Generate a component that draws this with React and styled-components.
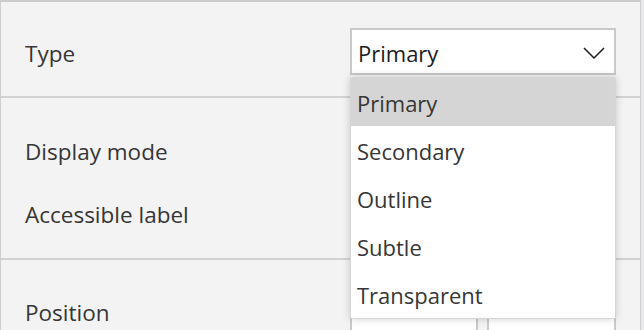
import React from "react";
import styled, { createGlobalStyle } from "styled-components";

const Global = createGlobalStyle`
  html, body { margin: 0; padding: 0; }
  body {
    background: #e9e9ec;
    font-family: "Open Sans", "Noto Sans", "Liberation Sans", sans-serif;
  }
`;

const Page = styled.div`
  width: 644px;
  height: 330px;
  overflow: hidden;
  background: #e9e9ec;
`;

const Panel = styled.div`
  width: 641px;
  box-sizing: border-box;
  background: #f3f3f3;
  border-left: 1px solid #cfcfcf;
  border-right: 1px solid #cfcfcf;
  border-top: 2px solid #cbcbcb;
  min-height: 330px;
`;

const Section = styled.section`
  display: flex;
  flex-direction: column;
  gap: ${(p) => p.$gap || 0}px;
  padding: ${(p) => p.$pad};
  border-top: ${(p) => (p.$first ? "none" : "2px solid #d2d2d2")};
`;

const Row = styled.div`
  display: grid;
  grid-template-columns: 1fr 266px;
  align-items: center;
  height: ${(p) => p.$h || 48}px;
  padding: 0 24px;
`;

const Label = styled.span`
  font-size: 22.5px;
  color: #363636;
  line-height: 1;
  padding-top: 5px;
`;

const SelectWrap = styled.div`
  position: relative;
  height: 100%;
`;

const SelectBox = styled.div`
  box-sizing: border-box;
  height: 100%;
  background: #fff;
  border: 2px solid #c9c9c9;
  display: flex;
  align-items: center;
  justify-content: space-between;
  padding: 2px 9px 0 6px;
  font-size: 22px;
  color: #1c1c1c;
`;

const Menu = styled.ul`
  position: absolute;
  z-index: 5;
  top: calc(100% + 2px);
  left: 0;
  right: 0;
  margin: 0;
  padding: 0;
  list-style: none;
  background: #fff;
  border: 1px solid #d6d6d6;
  border-radius: 2px;
  box-shadow: 0 0 8px rgba(0, 0, 0, 0.18);
  overflow: hidden;
`;

const Item = styled.li`
  height: 48px;
  display: flex;
  align-items: center;
  padding: 2px 0 0 6px;
  box-sizing: border-box;
  font-size: 22px;
  color: #363636;
  background: ${(p) => (p.$active ? "#d5d5d5" : "#fff")};
`;

const Field = styled.div`
  box-sizing: border-box;
  height: 100%;
  background: #fff;
  border: 2px solid #c9c9c9;
`;

const Pair = styled.div`
  display: grid;
  grid-template-columns: 128px 129px;
  gap: 9px;
  height: 100%;
`;

const Chevron = () => (
  <svg width="22" height="12" viewBox="0 0 22 12" fill="none">
    <path d="M1 1 L11 11 L21 1" stroke="#1e1e1e" strokeWidth="1.5" />
  </svg>
);

const options = ["Primary", "Secondary", "Outline", "Subtle", "Transparent"];

export default function App() {
  return (
    <Page>
      <Global />
      <Panel>
        <Section $first $pad="26px 0 21px">
          <Row $h={47}>
            <Label>Type</Label>
            <SelectWrap>
              <SelectBox>
                <span>Primary</span>
                <Chevron />
              </SelectBox>
              <Menu>
                {options.map((o, i) => (
                  <Item key={o} $active={i === 0}>
                    {o}
                  </Item>
                ))}
              </Menu>
            </SelectWrap>
          </Row>
        </Section>
        <Section $pad="28px 0 21px" $gap={15}>
          <Row>
            <Label>Display mode</Label>
            <Field />
          </Row>
          <Row>
            <Label>Accessible label</Label>
            <Field />
          </Row>
        </Section>
        <Section $pad="27px 0 0">
          <Row>
            <Label>Position</Label>
            <Pair>
              <Field />
              <Field />
            </Pair>
          </Row>
        </Section>
      </Panel>
    </Page>
  );
}
